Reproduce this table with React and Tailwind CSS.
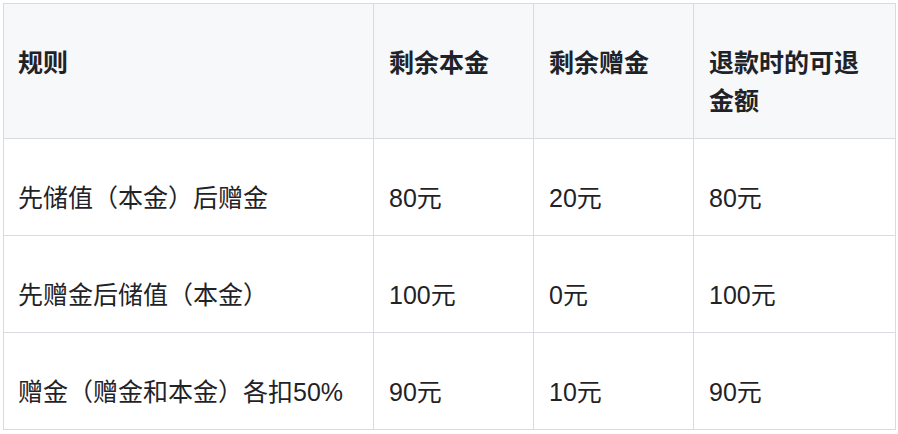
export default function App() {
  const rows = [
    ["先储值（本金）后赠金", "80元", "20元", "80元"],
    ["先赠金后储值（本金）", "100元", "0元", "100元"],
    ["赠金（赠金和本金）各扣50%", "90元", "10元", "90元"],
  ];

  return (
    <div
      className="bg-white w-[898px] h-[434px] pt-[3px] pl-[3px] text-[#1f2328]"
      style={{ fontFamily: '"Liberation Sans", "Noto Sans CJK SC", sans-serif' }}
    >
      <table className="border-collapse table-fixed w-[892px] text-[25px] leading-[38px]">
        <colgroup>
          <col className="w-[370px]" />
          <col className="w-[160px]" />
          <col className="w-[160px]" />
          <col className="w-[202px]" />
        </colgroup>
        <thead>
          <tr className="bg-[#f6f8fa]">
            <th className="border border-[#d8dbdf] pl-[14px] pr-[15px] pt-[40px] pb-[18px] align-top text-left font-semibold">规则</th>
            <th className="border border-[#d8dbdf] px-[15px] pt-[40px] pb-[18px] align-top text-left font-semibold">剩余本金</th>
            <th className="border border-[#d8dbdf] px-[15px] pt-[40px] pb-[18px] align-top text-left font-semibold">剩余赠金</th>
            <th className="border border-[#d8dbdf] px-[15px] pt-[40px] pb-[18px] align-top text-left font-semibold">退款时的可退金额</th>
          </tr>
        </thead>
        <tbody>
          {rows.map((row, i) => (
            <tr key={i}>
              {row.map((cell, j) => (
                <td
                  key={j}
                  className={`border border-[#d8dbdf] pt-[40px] pb-[18px] align-top ${j === 0 ? "pl-[14px] pr-[15px]" : "px-[15px]"}`}
                >
                  {cell}
                </td>
              ))}
            </tr>
          ))}
        </tbody>
      </table>
    </div>
  );
}
